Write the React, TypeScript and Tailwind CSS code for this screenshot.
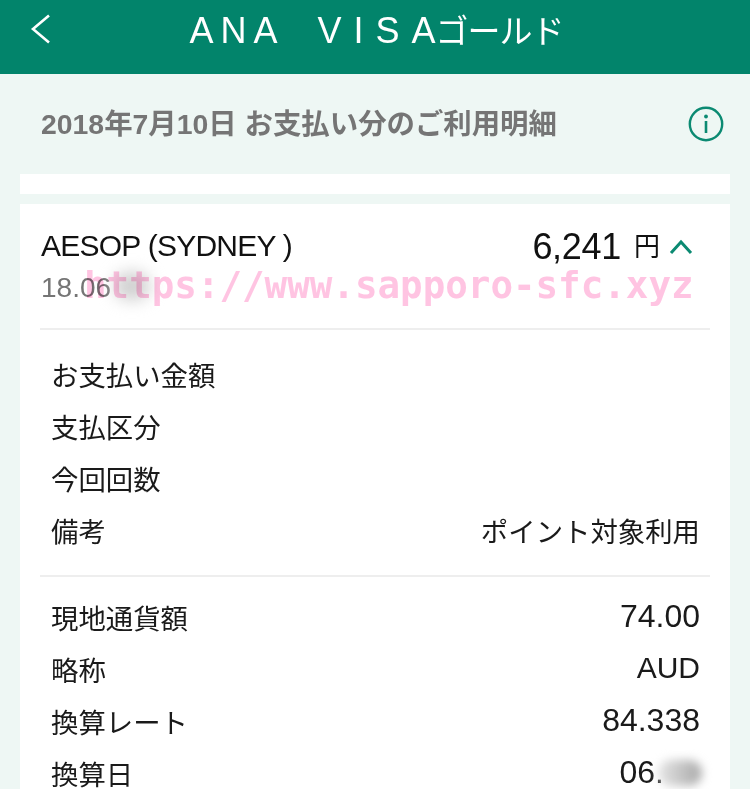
const font = { fontFamily: '"Liberation Sans", "Noto Sans CJK JP", sans-serif' };

function Row({ label, value, blur, small }: { label: string; value?: string; blur?: boolean; small?: boolean }) {
  return (
    <div className="flex h-[52px] items-center justify-between pl-[11px] pr-[10px] text-[27.4px] text-[#1a1a1a]">
      <span>{label}</span>
      {value && (
        <span className={`relative mb-[8px] flex leading-[36px] ${small ? "text-[30px]" : "text-[32px]"}`}>
          {value}
          {blur && <span className="w-[36px]" />}
          {blur && <span className="absolute right-[-2px] top-[6px] h-[26px] w-[44px] rounded-full bg-gradient-to-r from-[#e6e6e6] to-[#a8a8a8] blur-[5px]" />}
        </span>
      )}
    </div>
  );
}

export default function App() {
  return (
    <div className="h-[789px] w-[750px] overflow-hidden bg-[#eef7f4]" style={font}>
      <header className="relative flex h-[74px] items-start justify-center bg-[#02846b] pt-[9px] pl-[3px] text-white">
        <svg className="absolute left-[29px] top-[14px]" width="22" height="30" viewBox="0 0 22 30" fill="none">
          <path d="M20 1.5 L4 15 L20 28.5" stroke="white" strokeWidth="2.6" />
        </svg>
        <h1 className="flex items-baseline text-[36px] leading-[44px] font-normal whitespace-pre">
          <span className="tracking-[7px]">ANA</span>
          <span className="ml-[33px] tracking-[12px]">VIS</span>
          <span>A</span>
          <span className="text-[33px] tracking-[-1px]">ゴールド</span>
        </h1>
      </header>

      <div className="flex h-[100px] items-start justify-between pl-[41px] pr-[26px] pt-[31px]">
        <h2 className="text-[28.4px] leading-[38px] font-bold text-[#757575]">2018年7月10日 お支払い分のご利用明細</h2>
        <svg className="mt-[0.5px]" width="36" height="36" viewBox="0 0 36 36" fill="none">
          <circle cx="18" cy="18" r="16.2" stroke="#0b8a72" strokeWidth="2.4" />
          <circle cx="18" cy="10.5" r="1.9" fill="#0b8a72" />
          <path d="M18 15 V27" stroke="#0b8a72" strokeWidth="2.6" />
        </svg>
      </div>

      <div className="mx-[20px] h-[20px] bg-white" />

      <section className="relative mx-[20px] mt-[10px] h-[600px] bg-white px-[20px]">
        <div className="relative h-[126px] border-b-2 border-[#eeeeee]">
          <div className="absolute left-[1px] top-[24px] text-[30px] leading-[36px] tracking-[-0.75px] text-[#111111]">AESOP (SYDNEY )</div>
          <div className="absolute left-[1px] top-[68px] text-[28px] leading-[32px] text-[#757575]">18.06</div>
          <div className="absolute left-[74px] top-[68px] h-[28px] w-[36px] rounded-full bg-[#d0d0d0] blur-[8px]" />
          <div className="absolute right-[17px] top-[22px] flex items-center text-[#111111]">
            <span className="text-[36px] leading-[42px] tracking-[-0.3px]">6,241</span>
            <span className="ml-[13px] text-[26px] leading-[42px]">円</span>
            <svg className="ml-[9px]" width="24" height="16" viewBox="0 0 24 16" fill="none">
              <path d="M2 14 L12 3 L22 14" stroke="#0b8a72" strokeWidth="3" />
            </svg>
          </div>
        </div>

        <div className="border-b-2 border-[#eeeeee] pt-[21px] pb-[16px]">
          <Row label="お支払い金額" />
          <Row label="支払区分" />
          <Row label="今回回数" />
          <div className="flex h-[52px] items-center justify-between pl-[11px] pr-[10px] text-[27.4px] text-[#1a1a1a]">
            <span>備考</span>
            <span>ポイント対象利用</span>
          </div>
        </div>

        <div className="pt-[17px]">
          <Row label="現地通貨額" value="74.00" />
          <Row label="略称" value="AUD" small />
          <Row label="換算レート" value="84.338" />
          <Row label="換算日" value="06." blur />
        </div>

        <div
          className="absolute left-[64px] top-[46px] text-[37.5px] leading-[70px] font-bold whitespace-nowrap text-[#ffc4e2]"
          style={{ fontFamily: '"DejaVu Sans Mono", monospace', mixBlendMode: "multiply" }}
        >
          https://www.sapporo-sfc.xyz
        </div>
      </section>
    </div>
  );
}
